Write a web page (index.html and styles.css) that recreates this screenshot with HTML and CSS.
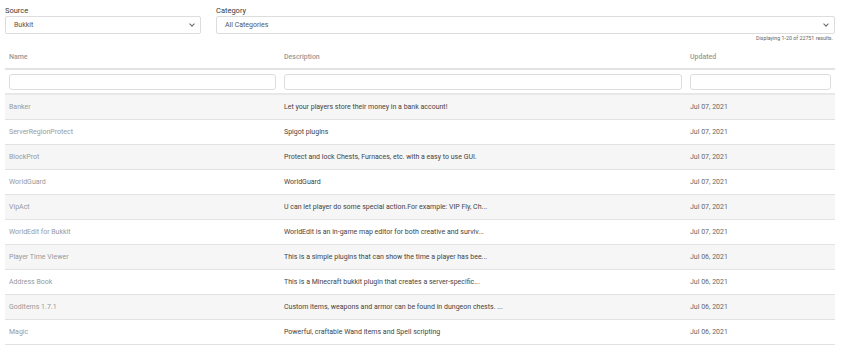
FILE: index.html
```html
<!DOCTYPE html>
<html lang="en">
<head>
    <meta charset="UTF-8">
    <title>Plugins</title>
    <link rel="stylesheet" href="styles.css">
</head>
<body>
    <!-- Filters -->
    <div class="filters">
        <div class="field field-source">
            <label>Source</label>
            <div class="select">Bukkit<span class="caret"></span></div>
        </div>
        <div class="field field-category">
            <label>Category</label>
            <div class="select">All Categories<span class="caret"></span></div>
        </div>
    </div>
    <p class="count">Displaying 1-20 of 22751 results.</p>

    <!-- Results -->
    <table class="results">
        <colgroup>
            <col class="col-name">
            <col class="col-desc">
            <col class="col-date">
        </colgroup>
        <thead>
            <tr class="head">
                <th>Name</th>
                <th>Description</th>
                <th>Updated</th>
            </tr>
            <tr class="search">
                <th><input type="text"></th>
                <th><input type="text"></th>
                <th><input type="text"></th>
            </tr>
        </thead>
        <tbody>
            <tr><td>Banker</td><td>Let your players store their money in a bank account!</td><td>Jul 07, 2021</td></tr>
            <tr><td>ServerRegionProtect</td><td>Spigot plugins</td><td>Jul 07, 2021</td></tr>
            <tr><td>BlockProt</td><td>Protect and lock Chests, Furnaces, etc. with a easy to use GUI.</td><td>Jul 07, 2021</td></tr>
            <tr><td>WorldGuard</td><td>WorldGuard</td><td>Jul 07, 2021</td></tr>
            <tr><td>VipAct</td><td>U can let player do some special action.For example: VIP Fly, Ch...</td><td>Jul 07, 2021</td></tr>
            <tr><td>WorldEdit for Bukkit</td><td>WorldEdit is an in-game map editor for both creative and surviv...</td><td>Jul 07, 2021</td></tr>
            <tr><td>Player Time Viewer</td><td>This is a simple plugins that can show the time a player has bee...</td><td>Jul 06, 2021</td></tr>
            <tr><td>Address Book</td><td>This is a Minecraft bukkit plugin that creates a server-specific...</td><td>Jul 06, 2021</td></tr>
            <tr><td>GodItems 1.7.1</td><td>Custom items, weapons and armor can be found in dungeon chests. ...</td><td>Jul 06, 2021</td></tr>
            <tr><td>Magic</td><td>Powerful, craftable Wand items and Spell scripting</td><td>Jul 06, 2021</td></tr>
        </tbody>
    </table>
</body>
</html>
```

FILE: styles.css
```css
/* Base */
* {
    box-sizing: border-box;
    margin: 0;
    padding: 0;
}

body {
    font-family: Roboto, "Liberation Sans", sans-serif;
    font-size: 7px;
    color: #333;
    background: #fff;
    padding: 6px 10px 0 5px;
}

/* Filters */
.filters {
    display: flex;
    gap: 15px;
}

.field label {
    display: block;
    font-size: 7.5px;
    color: #3a3a3a;
    line-height: 10px;
}

.field-source {
    width: 196px;
}

.field-category {
    flex: 1;
}

.select {
    position: relative;
    height: 18px;
    border: 1px solid #ddd;
    border-radius: 2px;
    padding-left: 8px;
    line-height: 16px;
    font-size: 7px;
    color: #555;
}

.caret {
    position: absolute;
    right: 6px;
    top: 5px;
    width: 4px;
    height: 4px;
    border-right: 1px solid #666;
    border-bottom: 1px solid #666;
    transform: rotate(45deg);
}

.count {
    text-align: right;
    font-size: 5.3px;
    color: #666;
    line-height: 8px;
    padding-right: 2px;
}

/* Table */
.results {
    width: 830px;
    border-collapse: collapse;
    margin-top: 4px;
}

.col-name { width: 275px; }
.col-desc { width: 406px; }
.col-date { width: 149px; }

.head th {
    text-align: left;
    font-weight: 500;
    color: #999;
    font-size: 7px;
    height: 23px;
    padding: 0 4px;
    border-bottom: 2px solid #e2e2e2;
}

.search th {
    padding: 4px 4px 3px;
    border-bottom: 2px solid #e8e8e8;
}

.search input {
    display: block;
    width: 100%;
    height: 16px;
    border: 1px solid #ddd;
    border-radius: 3px;
    background: #fff;
}

.search th:last-child input {
    width: 141px;
}

td {
    height: 25px;
    padding: 0 4px;
    border-bottom: 1px solid #e2e2e2;
    white-space: nowrap;
    color: #444;
}

td:first-child {
    color: #999;
}

td:last-child {
    color: #666;
}

tbody tr:nth-child(odd) {
    background: #f6f6f6;
}
```
